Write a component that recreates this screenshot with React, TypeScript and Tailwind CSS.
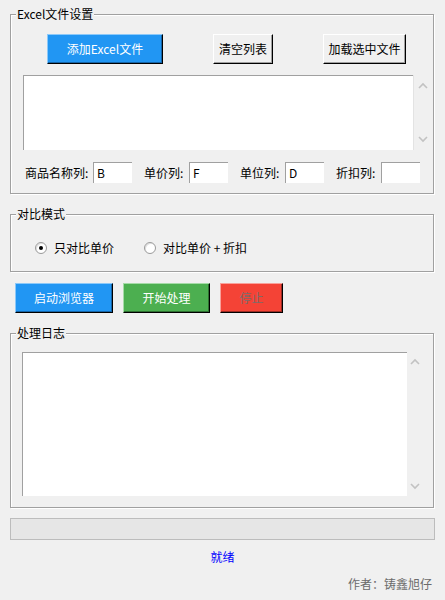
import type { ReactNode } from 'react'

const Chevron = ({ up }: { up?: boolean }) => (
  <svg width="10" height="7" viewBox="0 0 10 7">
    <polyline
      points={up ? '1,6 5,2 9,6' : '1,1 5,5 9,1'}
      fill="none"
      stroke="#c2c2c2"
      strokeWidth="1.6"
    />
  </svg>
)

const ScrollTrack = ({ className }: { className: string }) => (
  <div className={`flex flex-col items-center justify-between ${className}`}>
    <Chevron up />
    <Chevron />
  </div>
)

const Group = ({ title, className, children }: { title: string; className: string; children: ReactNode }) => (
  <div className={`relative w-[424px] border border-[#a0a0a0] shadow-[inset_1px_1px_0_#fff,1px_1px_0_#fff] ${className}`}>
    <span className="absolute left-[5px] top-[-9px] bg-[#f0f0f0] px-[1px] leading-[16px]">{title}</span>
    {children}
  </div>
)

const FlatButton = ({ label, className }: { label: string; className: string }) => (
  <button className={`flex h-[30px] items-center justify-center border-t border-l border-r border-b border-r-black border-b-black leading-[16px] ${className}`}>
    {label}
  </button>
)

const Field = ({ label, value, labelWidth, first }: { label: string; value: string; labelWidth: string; first?: boolean }) => (
  <div className={`flex items-center ${first ? '' : 'ml-[12px]'}`}>
    <span className={`${labelWidth} leading-[16px]`}>{label}</span>
    <div className="h-[21px] w-[39px] border-t border-l border-[#a0a0a0] bg-white pl-[3px] leading-[20px]">{value}</div>
  </div>
)

const Radio = ({ checked }: { checked?: boolean }) => (
  <span className="flex h-[12px] w-[12px] items-center justify-center rounded-full border border-[#9a9a9a] bg-white shadow-[inset_1px_1px_0_#e0e0e0]">
    {checked && <span className="h-[4px] w-[4px] rounded-full bg-black" />}
  </span>
)

export default function App() {
  return (
    <div className="h-[600px] w-[445px] bg-[#f0f0f0] pt-[14px] pl-[10px] font-['Noto_Sans_CJK_SC',sans-serif] text-[12px] text-black">
      <Group title="Excel文件设置" className="h-[180px]">
        <div className="flex gap-[50px] pt-[19px] pl-[36px]">
          <FlatButton label="添加Excel文件" className="w-[116px] bg-[#2196f3] text-white border-t-[#8cc9f9] border-l-[#8cc9f9] shadow-[inset_-1px_-1px_0_#1565a8]" />
          <FlatButton label="清空列表" className="w-[60px] bg-[#f0f0f0] border-t-white border-l-white border-r-[#696969] border-b-[#696969] shadow-[inset_-1px_-1px_0_#a0a0a0]" />
          <FlatButton label="加载选中文件" className="w-[83px] bg-[#f0f0f0] border-t-white border-l-white border-r-[#696969] border-b-[#696969] shadow-[inset_-1px_-1px_0_#a0a0a0]" />
        </div>
        <div className="mt-[11px] flex pl-[12px]">
          <div className="h-[75px] w-[390px] border-t border-l border-[#a0a0a0] bg-white shadow-[1px_0_0_#e3e3e3]" />
          <ScrollTrack className="h-[75px] w-[19px] py-[7px]" />
        </div>
        <div className="mt-[12px] flex pl-[14px]">
          <Field first label="商品名称列:" value="B" labelWidth="w-[68px]" />
          <Field label="单价列:" value="F" labelWidth="w-[45px]" />
          <Field label="单位列:" value="D" labelWidth="w-[45px]" />
          <Field label="折扣列:" value="" labelWidth="w-[45px]" />
        </div>
      </Group>

      <Group title="对比模式" className="mt-[20px] h-[58px]">
        <div className="flex h-[15px] items-center pt-0 pl-[24px] mt-[25px]">
          <div className="flex w-[109px] items-center gap-[7px]">
            <Radio checked />
            <span className="leading-[16px]">只对比单价</span>
          </div>
          <div className="flex items-center gap-[7px]">
            <Radio />
            <span className="leading-[16px]">对比单价 + 折扣</span>
          </div>
        </div>
      </Group>

      <div className="mt-[11px] flex gap-[10px] pl-[5px]">
        <FlatButton label="启动浏览器" className="w-[98px] bg-[#2196f3] text-white border-t-[#8cc9f9] border-l-[#8cc9f9] shadow-[inset_-1px_-1px_0_#1565a8]" />
        <FlatButton label="开始处理" className="w-[87px] bg-[#4caf50] text-white border-t-[#a5dba7] border-l-[#a5dba7] shadow-[inset_-1px_-1px_0_#2e7031]" />
        <FlatButton label="停止" className="w-[63px] bg-[#f44336] text-[#7d6a68] border-t-[#f9a19a] border-l-[#f9a19a] shadow-[inset_-1px_-1px_0_#9c2b23]" />
      </div>

      <Group title="处理日志" className="mt-[20px] h-[175px]">
        <div className="flex pt-[18px] pl-[11px]">
          <div className="h-[144px] w-[385px] border-t border-l border-[#a0a0a0] bg-white" />
          <ScrollTrack className="h-[144px] w-[15px] py-[6px]" />
        </div>
      </Group>

      <div className="mt-[10px] h-[22px] w-[425px] border border-[#bcbcbc] bg-[#e6e6e6]" />

      <div className="mt-[9px] w-[425px] text-center leading-[16px] text-[#0000ff]">就绪</div>

      <div className="mt-[11px] w-[425px] pr-[3px] text-right leading-[16px] text-[#6b6b6b]">作者：铸鑫旭仔</div>
    </div>
  )
}
